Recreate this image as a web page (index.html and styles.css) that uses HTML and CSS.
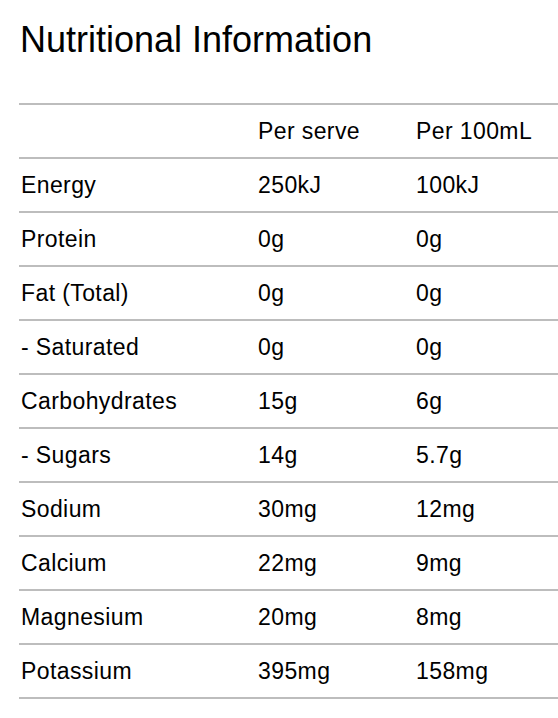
FILE: index.html
```html
<!DOCTYPE html>
<html lang="en">
<head>
<meta charset="utf-8">
<title>Nutritional Information</title>
<link rel="stylesheet" href="styles.css">
</head>
<body>
<section class="nutrition">
  <h1 class="nutrition-title">Nutritional Information</h1>
  <table class="nutrition-table">
    <thead>
      <tr><th class="col-name"></th><th class="col-serve">Per serve</th><th class="col-100">Per 100mL</th></tr>
    </thead>
    <tbody>
      <tr><td>Energy</td><td>250kJ</td><td>100kJ</td></tr>
      <tr><td>Protein</td><td>0g</td><td>0g</td></tr>
      <tr><td>Fat (Total)</td><td>0g</td><td>0g</td></tr>
      <tr><td>- Saturated</td><td>0g</td><td>0g</td></tr>
      <tr><td>Carbohydrates</td><td>15g</td><td>6g</td></tr>
      <tr><td>- Sugars</td><td>14g</td><td>5.7g</td></tr>
      <tr><td>Sodium</td><td>30mg</td><td>12mg</td></tr>
      <tr><td>Calcium</td><td>22mg</td><td>9mg</td></tr>
      <tr><td>Magnesium</td><td>20mg</td><td>8mg</td></tr>
      <tr><td>Potassium</td><td>395mg</td><td>158mg</td></tr>
    </tbody>
  </table>
</section>
</body>
</html>
```
FILE: styles.css
```css
html, body {
  margin: 0;
  padding: 0;
  background: #ffffff;
}

body {
  font-family: "Liberation Sans", Arial, sans-serif;
  color: #000000;
  overflow: hidden;
}

.nutrition {
  padding: 19px 0 0 19px;
}

.nutrition-title {
  margin: 0 0 0 1px;
  font-size: 36px;
  font-weight: normal;
  line-height: 41px;
  color: #000000;
}

.nutrition-table {
  margin-top: 43px;
  width: 539px;
  border-collapse: separate;
  border-spacing: 0;
  border-top: 2px solid #bdbdbd;
  table-layout: fixed;
}

.nutrition-table th,
.nutrition-table td {
  padding: 3px 0 3px 2px;
  line-height: 46px;
  font-size: 23px;
  letter-spacing: 0.4px;
  font-weight: normal;
  text-align: left;
  border-bottom: 2px solid #bdbdbd;
  white-space: nowrap;
}

.col-name { width: 235px; }
.col-serve { width: 156px; }
.col-100 { width: auto; }
```
